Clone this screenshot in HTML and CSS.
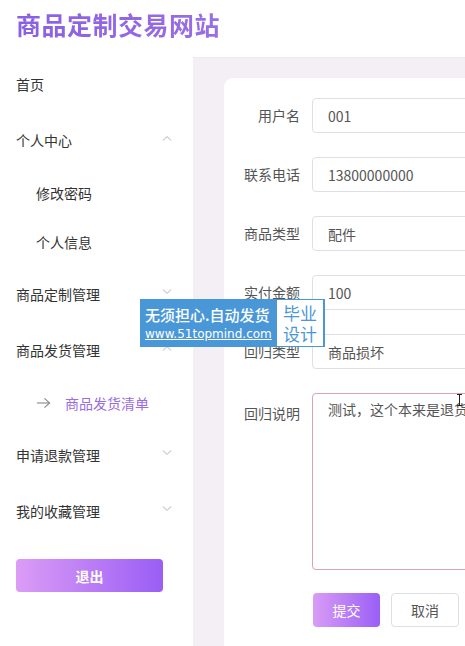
FILE: index.html
```html
<!DOCTYPE html>
<html lang="zh-CN">
<head>
    <meta charset="UTF-8">
    <meta name="viewport" content="width=device-width, initial-scale=1.0">
    <title>商品定制交易网站</title>
    <link rel="stylesheet" href="styles.css">
</head>
<body>

    <header class="header">
        <h1 class="site-title">商品定制交易网站</h1>
    </header>

    <div class="layout">
        <!-- left menu -->
        <aside class="sidebar">
            <div class="menu-item">首页</div>
            <div class="menu-item">个人中心
                <svg class="chevron" viewBox="0 0 10 6"><polyline points="1,5.5 5,1.5 9,5.5"/></svg>
            </div>
            <div class="sub-item">修改密码</div>
            <div class="sub-item">个人信息</div>
            <div class="menu-item">商品定制管理
                <svg class="chevron" viewBox="0 0 10 6"><polyline points="1,0.5 5,4.5 9,0.5"/></svg>
            </div>
            <div class="menu-item">商品发货管理
                <svg class="chevron" viewBox="0 0 10 6"><polyline points="1,5.5 5,1.5 9,5.5"/></svg>
            </div>
            <div class="sub-item active">
                <svg class="arrow" viewBox="0 0 16 12"><line x1="1" y1="6" x2="14.5" y2="6"/><polyline points="9,1 14.5,6 9,11"/></svg>
                商品发货清单
            </div>
            <div class="menu-item">申请退款管理
                <svg class="chevron" viewBox="0 0 10 6"><polyline points="1,0.5 5,4.5 9,0.5"/></svg>
            </div>
            <div class="menu-item">我的收藏管理
                <svg class="chevron" viewBox="0 0 10 6"><polyline points="1,0.5 5,4.5 9,0.5"/></svg>
            </div>
            <button class="btn btn-logout">退出</button>
        </aside>

        <main class="main">
            <form class="card">
                <div class="form-row">
                    <label class="form-label">用户名</label>
                    <input class="form-input" type="text" value="001">
                </div>
                <div class="form-row">
                    <label class="form-label">联系电话</label>
                    <input class="form-input" type="text" value="13800000000">
                </div>
                <div class="form-row">
                    <label class="form-label">商品类型</label>
                    <input class="form-input" type="text" value="配件">
                </div>
                <div class="form-row">
                    <label class="form-label">实付金额</label>
                    <input class="form-input" type="text" value="100">
                </div>
                <div class="form-row">
                    <label class="form-label">回归类型</label>
                    <input class="form-input" type="text" value="商品损坏">
                </div>
                <div class="form-row">
                    <label class="form-label">回归说明</label>
                    <textarea class="form-textarea">测试，这个本来是退货的，但是写成回归了</textarea>
                </div>
                <div class="form-actions">
                    <button type="button" class="btn btn-submit">提交</button>
                    <button type="button" class="btn btn-cancel">取消</button>
                </div>
            </form>
        </main>
    </div>

    <!-- mouse cursor over the textarea -->
    <svg class="cursor" viewBox="0 0 7 12"><path d="M1 0.5h5M3.5 0.5v11M1 11.5h5"/></svg>

    <!-- watermark banner -->
    <div class="watermark">
        <div class="wm-left">
            <span class="wm-line1">无须担心.自动发货</span>
            <span class="wm-line2">www.51topmind.com</span>
        </div>
        <div class="wm-right">毕业<br>设计</div>
    </div>

</body>
</html>
```

FILE: styles.css
```css
body {
    margin: 0;
    font-family: "Noto Sans CJK SC", "Liberation Sans", sans-serif;
    font-size: 14px;
    color: #333;
    background: #fff;
    width: 465px;
    height: 646px;
    overflow: hidden;
}
.header {
    height: 57px;
    border-bottom: 1px solid #ececec;
    display: flex;
    align-items: center;
    padding-left: 16px;
}
.site-title {
    margin: 0;
    font-size: 25px;
    font-weight: bold;
    letter-spacing: 0.5px;
    color: #8b62e2;
    background: linear-gradient(to right, #8a5fe3, #9a6ee4);
    -webkit-background-clip: text;
    -webkit-text-fill-color: transparent;
    margin-top: -10px;
}
.layout {
    display: flex;
    height: 588px;
}
.sidebar {
    width: 193px;
    flex-shrink: 0;
    background: #fff;
    margin-top: -2px;
}
.menu-item {
    height: 56px;
    display: flex;
    align-items: center;
    justify-content: space-between;
    padding: 0 21px 0 16px;
    color: #333;
}
.sub-item {
    height: 49px;
    display: flex;
    align-items: center;
    padding-left: 36px;
    color: #333;
}
.sub-item.active {
    color: #9b6ce4;
}
.chevron {
    width: 10px;
    height: 6px;
    fill: none;
    stroke: #b0b0b0;
    stroke-width: 1;
    margin-top: -4px;
}
.arrow {
    width: 15px;
    height: 12px;
    fill: none;
    stroke: #8a8a8a;
    stroke-width: 1.2;
    margin-right: 14px;
}
.btn {
    font-family: inherit;
    font-size: 14px;
    border-radius: 4px;
    cursor: pointer;
}
.btn-logout {
    display: block;
    margin: 20px 0 0 16px;
    width: 147px;
    height: 33px;
    border: none;
    color: #fff;
    font-weight: bold;
    background: linear-gradient(to right, #dc9cf6, #9a5ef5);
}
.main {
    flex: 1;
    background: #f3eff5;
    padding: 20px 0 0 31px;
    overflow: hidden;
}
.card {
    width: 600px;
    height: 600px;
    background: #fff;
    border-radius: 9px;
    padding: 20px 0 0 0;
    box-sizing: border-box;
}
.form-row {
    display: flex;
    align-items: flex-start;
    margin-bottom: 24px;
}
.form-label {
    width: 76px;
    text-align: right;
    line-height: 35px;
    padding-right: 12px;
    color: #555;
    flex-shrink: 0;
}
.form-row:nth-child(6) .form-label {
    line-height: 40px;
}
.form-input {
    width: 400px;
    height: 35px;
    box-sizing: border-box;
    border: 1px solid #dcdfe6;
    border-radius: 4px;
    padding: 0 15px;
    font-family: inherit;
    font-size: 14px;
    color: #555;
    outline: none;
}
.form-textarea {
    width: 400px;
    height: 177px;
    box-sizing: border-box;
    border: 1px solid #dba4ad;
    border-radius: 4px;
    padding: 4px 15px;
    font-family: inherit;
    font-size: 14px;
    line-height: 22px;
    color: #555;
    resize: none;
    outline: none;
    white-space: nowrap;
}
.form-row:nth-child(6) {
    margin-bottom: 23px;
}
.form-actions {
    display: flex;
    gap: 11px;
    padding-left: 89px;
}
.btn-submit {
    width: 67px;
    height: 34px;
    border: none;
    color: #fff;
    background: linear-gradient(to right, #d99cf6, #9a5ff5);
}
.btn-cancel {
    width: 68px;
    height: 34px;
    border: 1px solid #dcdfe6;
    background: #fff;
    color: #555;
}
.cursor {
    position: absolute;
    left: 456px;
    top: 394px;
    width: 7px;
    height: 12px;
    fill: none;
    stroke: #222;
    stroke-width: 1;
}
.watermark {
    position: absolute;
    left: 140px;
    top: 299px;
    height: 46px;
    display: flex;
    background: #4a97d8;
    padding: 1px 2px 1px 0;
}
.wm-left {
    display: flex;
    flex-direction: column;
    justify-content: center;
    width: 128px;
    padding: 0 4px 0 5px;
    color: #fff;
}
.wm-line1 {
    font-size: 15px;
    line-height: 21px;
    font-weight: 500;
}
.wm-line2 {
    font-family: "DejaVu Sans", sans-serif;
    font-size: 12px;
    line-height: 18px;
    text-decoration: underline;
    white-space: nowrap;
}
.wm-right {
    background: #fff;
    color: #4a97d8;
    width: 46px;
    font-size: 17px;
    line-height: 21px;
    text-align: center;
    display: flex;
    align-items: center;
    justify-content: center;
}
```
